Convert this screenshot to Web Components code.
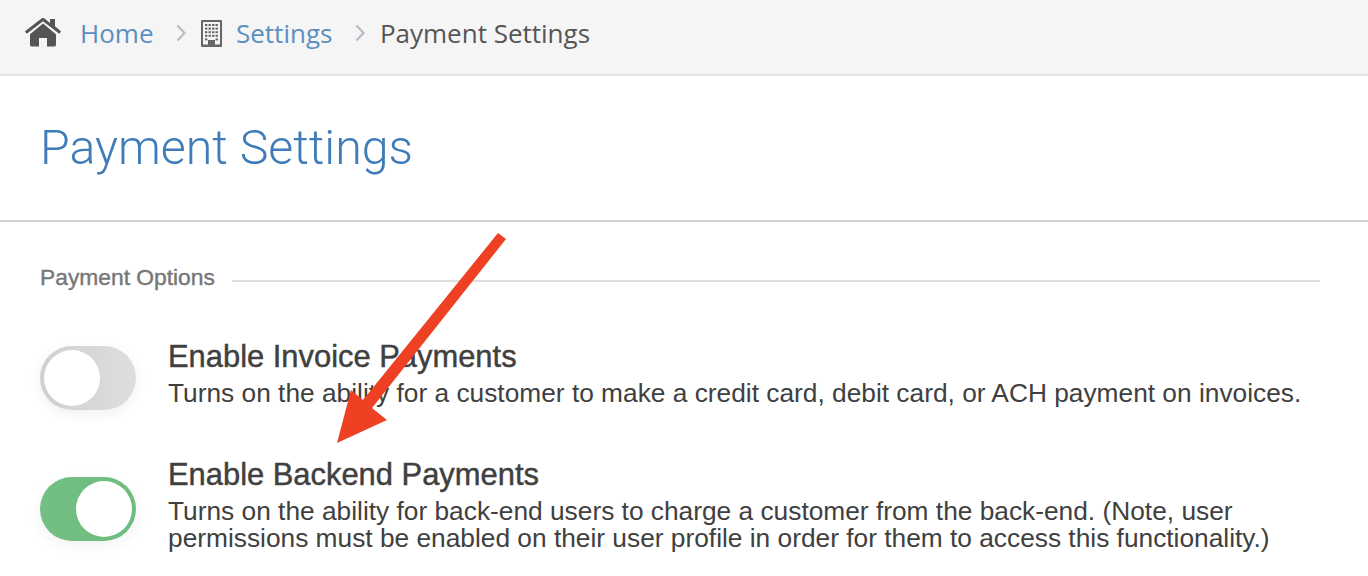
<!DOCTYPE html>
<html><head><meta charset="utf-8"><style>
html,body{margin:0;padding:0;background:#fff;overflow:hidden}
body{width:1368px;height:576px;position:relative;font-family:"Liberation Sans",Arial,sans-serif}
</style></head><body>
<app-breadcrumb></app-breadcrumb>
<page-title>Payment Settings</page-title>
<settings-section heading="Payment Options">
  <toggle-row title-text="Enable Invoice Payments">Turns on the ability for a customer to make a credit card, debit card, or ACH payment on invoices.</toggle-row>
  <toggle-row on title-text="Enable Backend Payments">Turns on the ability for back-end users to charge a customer from the back-end. (Note, user permissions must be enabled on their user profile in order for them to access this functionality.)</toggle-row>
</settings-section>
<red-arrow></red-arrow>
<script>
function def(name,html,init){customElements.define(name,class extends HTMLElement{constructor(){super();this.attachShadow({mode:'open'}).innerHTML=html;}connectedCallback(){init&&init(this)}})}
def('app-breadcrumb',`<style>
:host{display:flex;align-items:center;box-sizing:border-box;height:76px;background:#f5f5f5;border-bottom:2px solid #e3e3e3;padding:0 0 8px 25px;font:26px/1 "Open Sans",sans-serif;color:#555}
a{color:#5b8fc0;text-decoration:none}
svg{display:block;flex:none}
</style>
<svg width="36" height="30" viewBox="0 0 36 30" style="margin-right:19px"><path fill="#555" d="M18 5.500 5 16.200V27a1.400 1.400 0 0 0 1.400 1.400H14V20h8v8.400h7.600A1.400 1.400 0 0 0 31 27V16.200Z"/><path fill="#555" d="M25 1h5v7.200l5.600 4.700a.8.8 0 0 1 .1 1.100l-1 1.200a.8.8 0 0 1-1.100.1L18 3.200 2.400 15.300a.8.8 0 0 1-1.100-.1l-1-1.200a.8.8 0 0 1 .1-1.100L16.500.5a2.400 2.400 0 0 1 3 0L25 5Z"/></svg>
<a>Home</a>
<svg style="margin:0 15px 0 23px" width="10" height="18" viewBox="0 0 10 18"><path d="M1.500 1.500 8.500 9l-7 7.500" fill="none" stroke="#b9bcc6" stroke-width="2.200"/></svg>
<svg width="21" height="27" viewBox="0 0 21 27" style="margin-right:13.500px"><rect width="21" height="27" fill="#666" rx="1"/><rect x="2" y="2" width="17" height="22.500" fill="#f5f5f5"/><g fill="#666" id="w"></g><rect x="7" y="20" width="7" height="6" fill="#666"/></svg>
<a>Settings</a>
<svg style="margin:0 14.500px 0 23px" width="10" height="18" viewBox="0 0 10 18"><path d="M1.500 1.500 8.500 9l-7 7.500" fill="none" stroke="#b9bcc6" stroke-width="2.200"/></svg>
<span>Payment Settings</span>`,h=>{const g=h.shadowRoot.getElementById('w');let s='';for(let r=0;r<5;r++)for(let c=0;c<4;c++)if(r<4||c==0||c==3)s+=`<rect x="${4+c*3.500}" y="${4+r*3.600}" width="2.400" height="2"/>`;g.innerHTML=s;});
def('page-title',`<style>
:host{display:block;box-sizing:border-box;height:146px;border-bottom:2px solid #d0d0d0;padding:44px 0 0 40px;font:300 48.300px/56px Roboto,"Liberation Sans",sans-serif;color:#3f7cb9}
</style><slot></slot>`);
def('settings-section',`<style>
:host{display:block;padding:42px 48px 0 40px}
.h{display:flex;align-items:center;gap:17px;min-height:28px;font:400 22.800px/28px "Liberation Sans",sans-serif;color:#777;-webkit-text-stroke:.4px #777;margin-bottom:45px}
.h span{margin-top:-2px}
.h i{flex:1;height:2px;background:#dedede;margin-top:6px}
</style><div class="h"><span id="t"></span><i></i></div><slot></slot>`,h=>{h.shadowRoot.getElementById('t').textContent=h.getAttribute('heading')});
def('toggle-row',`<style>
:host{display:flex;align-items:center;gap:32px;margin-bottom:48px;color:#404040}
:host(:last-child){margin-bottom:0}
.sw{flex:none;width:96px;height:64px;border-radius:32px;position:relative;margin-top:9px;box-shadow:0 4px 14px rgba(0,0,0,.06);background:linear-gradient(90deg,#d0d0d0,#dedede)}
.k{position:absolute;left:4px;top:4px;width:56px;height:56px;border-radius:50%;background:#fff}
:host([on]) .sw{margin-top:8px;background:linear-gradient(90deg,#73bf83,#6fbc7f)}
:host([on]) .k{left:36px}
.b{flex:1}
h3{margin:0;font:400 30.900px/34px "Liberation Sans",sans-serif;-webkit-text-stroke:.45px #404040}
p{margin:6px 0 0;font:26.300px/27px "Liberation Sans",sans-serif}
</style><div class="sw"><div class="k"></div></div><div class="b"><h3 id="t"></h3><p><slot></slot></p></div>`,h=>{h.shadowRoot.getElementById('t').textContent=h.getAttribute('title-text')});
def('red-arrow',`<style>:host{position:absolute;left:0;top:0;width:1368px;height:576px;pointer-events:none}</style>
<svg width="1368" height="576"><polygon fill="#ee4023" points="498,233 506,239 372,408 387,420 337,443 351,390 363,400"/></svg>`);
</script></body></html>
